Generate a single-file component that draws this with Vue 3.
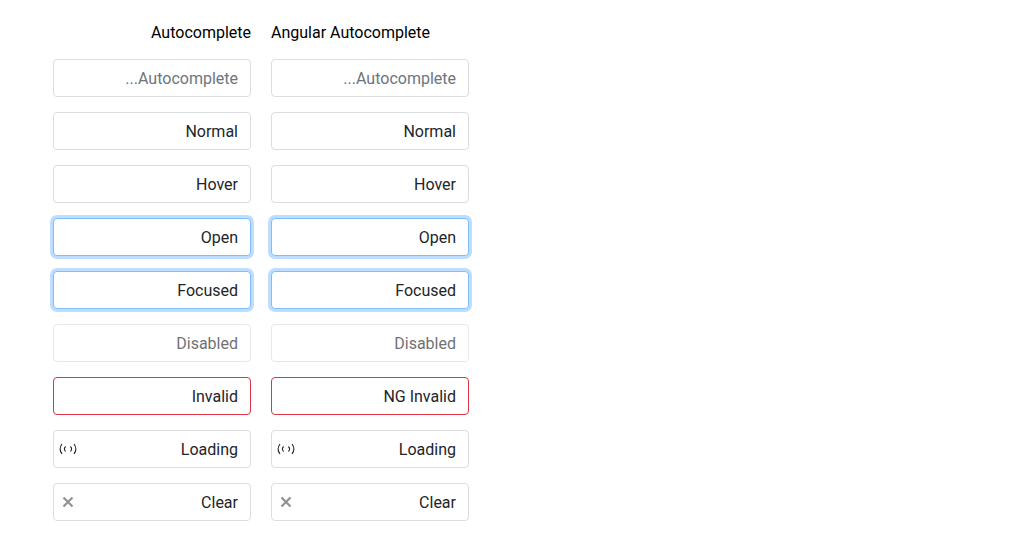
<script setup>
const rows = [
  { a: '', b: '', state: '' },
  { a: 'Normal', b: 'Normal', state: '' },
  { a: 'Hover', b: 'Hover', state: '' },
  { a: 'Open', b: 'Open', state: 'focused' },
  { a: 'Focused', b: 'Focused', state: 'focused' },
  { a: 'Disabled', b: 'Disabled', state: 'disabled' },
  { a: 'Invalid', b: 'NG Invalid', state: 'invalid' },
  { a: 'Loading', b: 'Loading', state: 'loading' },
  { a: 'Clear', b: 'Clear', state: 'clear' },
]
const cells = rows.flatMap((r) => [
  { value: r.a, state: r.state, group: 'Autocomplete' },
  { value: r.b, state: r.state, group: 'Angular Autocomplete' },
])
</script>

<template>
  <main class="grid">
    <h2 class="heading first">Autocomplete</h2>
    <h2 class="heading">Angular Autocomplete</h2>
    <div v-for="(c, i) in cells" :key="i" class="field" :class="c.state">
      <svg v-if="c.state === 'loading'" class="spinner" viewBox="0 0 16 16" aria-hidden="true">
        <path d="M2 3Q-1.8 8 2 13M14 3Q17.8 8 14 13M5.6 5.5Q3.2 8 5.6 10.5M10.4 5.5Q12.8 8 10.4 10.5" />
      </svg>
      <button v-if="c.state === 'clear'" class="clear-button" type="button" aria-label="Clear">
        <svg viewBox="0 0 16 16" aria-hidden="true"><path d="M3.5 3.5L12.5 12.5M12.5 3.5L3.5 12.5" /></svg>
      </button>
      <input
        type="text"
        dir="rtl"
        placeholder="Autocomplete..."
        :value="c.value"
        :aria-label="c.group + ' ' + c.value"
        :disabled="c.state === 'disabled'"
        :aria-invalid="c.state === 'invalid'"
      />
    </div>
  </main>
</template>

<style>
body {
  background: #fff;
}
</style>

<style scoped>
.grid {
  display: grid;
  grid-template-columns: minmax(0, 198px) minmax(0, 198px);
  column-gap: 20px;
  row-gap: 15px;
  padding: 22px 20px 20px 53px;
  font: 16px/22px Roboto, sans-serif;
}
.heading {
  margin: 0;
  font: inherit;
  color: #000;
}
.first {
  text-align: right;
}
.field {
  box-sizing: border-box;
  display: flex;
  align-items: center;
  height: 38px;
  border: 1px solid #dcdddf;
  border-radius: 4px;
  background: #fff;
  color: #212529;
}
.field input {
  flex: 1;
  min-width: 0;
  box-sizing: border-box;
  height: 36px;
  padding: 6px 12px;
  border: 0;
  outline: 0;
  background: none;
  color: inherit;
  font: inherit;
}
.field input::placeholder {
  color: #6c757d;
  opacity: 1;
}
.focused {
  border-color: #80bdff;
  box-shadow: 0 0 0 3px #bfdeff;
}
.disabled {
  opacity: 0.65;
}
.invalid {
  border-color: #dc3545;
}
.spinner {
  width: 16px;
  height: 16px;
  margin-left: 6px;
  overflow: visible;
  fill: none;
  stroke: #212529;
  stroke-width: 1.1;
}
.clear-button {
  display: flex;
  padding: 0;
  margin-left: 6px;
  border: 0;
  background: none;
  color: #909294;
}
.clear-button svg {
  width: 16px;
  height: 16px;
  fill: none;
  stroke: currentColor;
  stroke-width: 2.2;
}
</style>
